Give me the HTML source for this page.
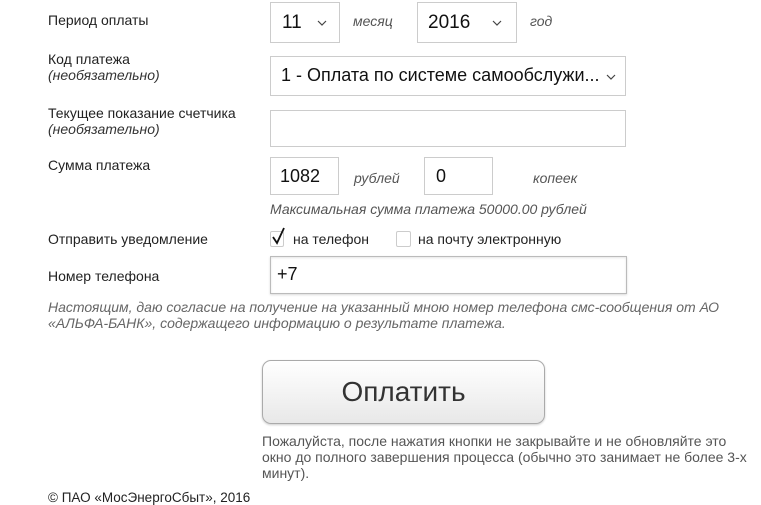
<!DOCTYPE html>
<html><head><meta charset="utf-8"><style>
body{margin:0;width:761px;height:502px;overflow:hidden;background:#fff;font-family:"Liberation Sans",Arial,sans-serif;color:#222;position:relative}
.a{position:absolute;white-space:nowrap}
.l{font-size:14px;color:#222}
.i{font-style:italic;color:#555;font-size:14px}
.b{position:absolute;border:1px solid #ccc;background:#fff;box-sizing:border-box}
.v{font-size:19px;color:#111;position:absolute;top:9px}
.ch{position:absolute}
</style></head><body>
<div class="a l" style="left:48px;top:12px">Период оплаты</div>
<div class="b" style="left:270px;top:2px;width:70px;height:41px"><span class="v" style="left:11px">11</span><svg class="ch" style="left:46px;top:17px" width="10" height="7"><path d="M1 1 L5 5 L9 1" stroke="#444" stroke-width="1.2" fill="none"/></svg></div>
<div class="a i" style="left:353px;top:13px">месяц</div>
<div class="b" style="left:417px;top:2px;width:100px;height:41px"><span class="v" style="left:10px">2016</span><svg class="ch" style="left:74px;top:17px" width="10" height="7"><path d="M1 1 L5 5 L9 1" stroke="#444" stroke-width="1.2" fill="none"/></svg></div>
<div class="a i" style="left:530px;top:13px">год</div>

<div class="a l" style="left:48px;top:51px">Код платежа</div>
<div class="a i" style="left:48px;top:67px;color:#333">(необязательно)</div>
<div class="b" style="left:270px;top:56px;width:356px;height:40px"><span class="v" style="left:10px;top:8px;font-size:18px">1 - Оплата по системе самообслужи...</span><svg class="ch" style="left:335px;top:17px" width="10" height="7"><path d="M1 1 L5 5 L9 1" stroke="#444" stroke-width="1.2" fill="none"/></svg></div>

<div class="a l" style="left:48px;top:105px">Текущее показание счетчика</div>
<div class="a i" style="left:48px;top:121px;color:#333">(необязательно)</div>
<div class="b" style="left:270px;top:110px;width:356px;height:37px"></div>

<div class="a l" style="left:48px;top:157px">Сумма платежа</div>
<div class="b" style="left:270px;top:157px;width:69px;height:38px"><span class="v" style="left:9px;top:8px;font-size:18px">1082</span></div>
<div class="a i" style="left:354px;top:170px">рублей</div>
<div class="b" style="left:424px;top:157px;width:69px;height:38px"><span class="v" style="left:11px;top:8px;font-size:18px">0</span></div>
<div class="a i" style="left:533px;top:170px">копеек</div>
<div class="a i" style="left:270px;top:201px">Максимальная сумма платежа 50000.00 рублей</div>

<div class="a l" style="left:48px;top:231px">Отправить уведомление</div>
<div class="b" style="left:270px;top:231px;width:14px;height:16px;border-radius:2px"></div>
<svg class="a" style="left:271px;top:226px" width="16" height="20"><path d="M2 11 L6 17 L13 2" stroke="#111" stroke-width="1.8" fill="none"/></svg>
<div class="a l" style="left:293px;top:231px">на телефон</div>
<div class="b" style="left:396px;top:231px;width:15px;height:16px;border-radius:2px"></div>
<div class="a l" style="left:418px;top:231px">на почту электронную</div>

<div class="a l" style="left:48px;top:268px">Номер телефона</div>
<div class="b" style="left:270px;top:256px;width:357px;height:38px;border-color:#bbb;box-shadow:inset 0 1px 2px rgba(0,0,0,.1),0 1px 2px rgba(0,0,0,.15)"><span class="v" style="left:6px;top:7px;font-size:18px">+7</span></div>

<div class="a i" style="left:48px;top:299px;color:#666;line-height:16px;font-size:14px">Настоящим, даю согласие на получение на указанный мною номер телефона смс-сообщения от АО<br>«АЛЬФА-БАНК», содержащего информацию о результате платежа.</div>

<div class="a" style="left:262px;top:360px;width:283px;height:64px;box-sizing:border-box;border:1px solid #aaa;border-radius:9px;background:linear-gradient(#fff,#e8e8e8);box-shadow:0 1px 2px rgba(0,0,0,.2);text-align:center;line-height:62px;font-size:28px;color:#333">Оплатить</div>

<div class="a" style="left:262px;top:433px;font-size:14px;color:#555;line-height:16px">Пожалуйста, после нажатия кнопки не закрывайте и не обновляйте это<br>окно до полного завершения процесса (обычно это занимает не более 3-х<br>минут).</div>

<div class="a l" style="left:48px;top:490px;font-size:13.5px">© ПАО «МосЭнергоСбыт», 2016</div>
</body></html>
